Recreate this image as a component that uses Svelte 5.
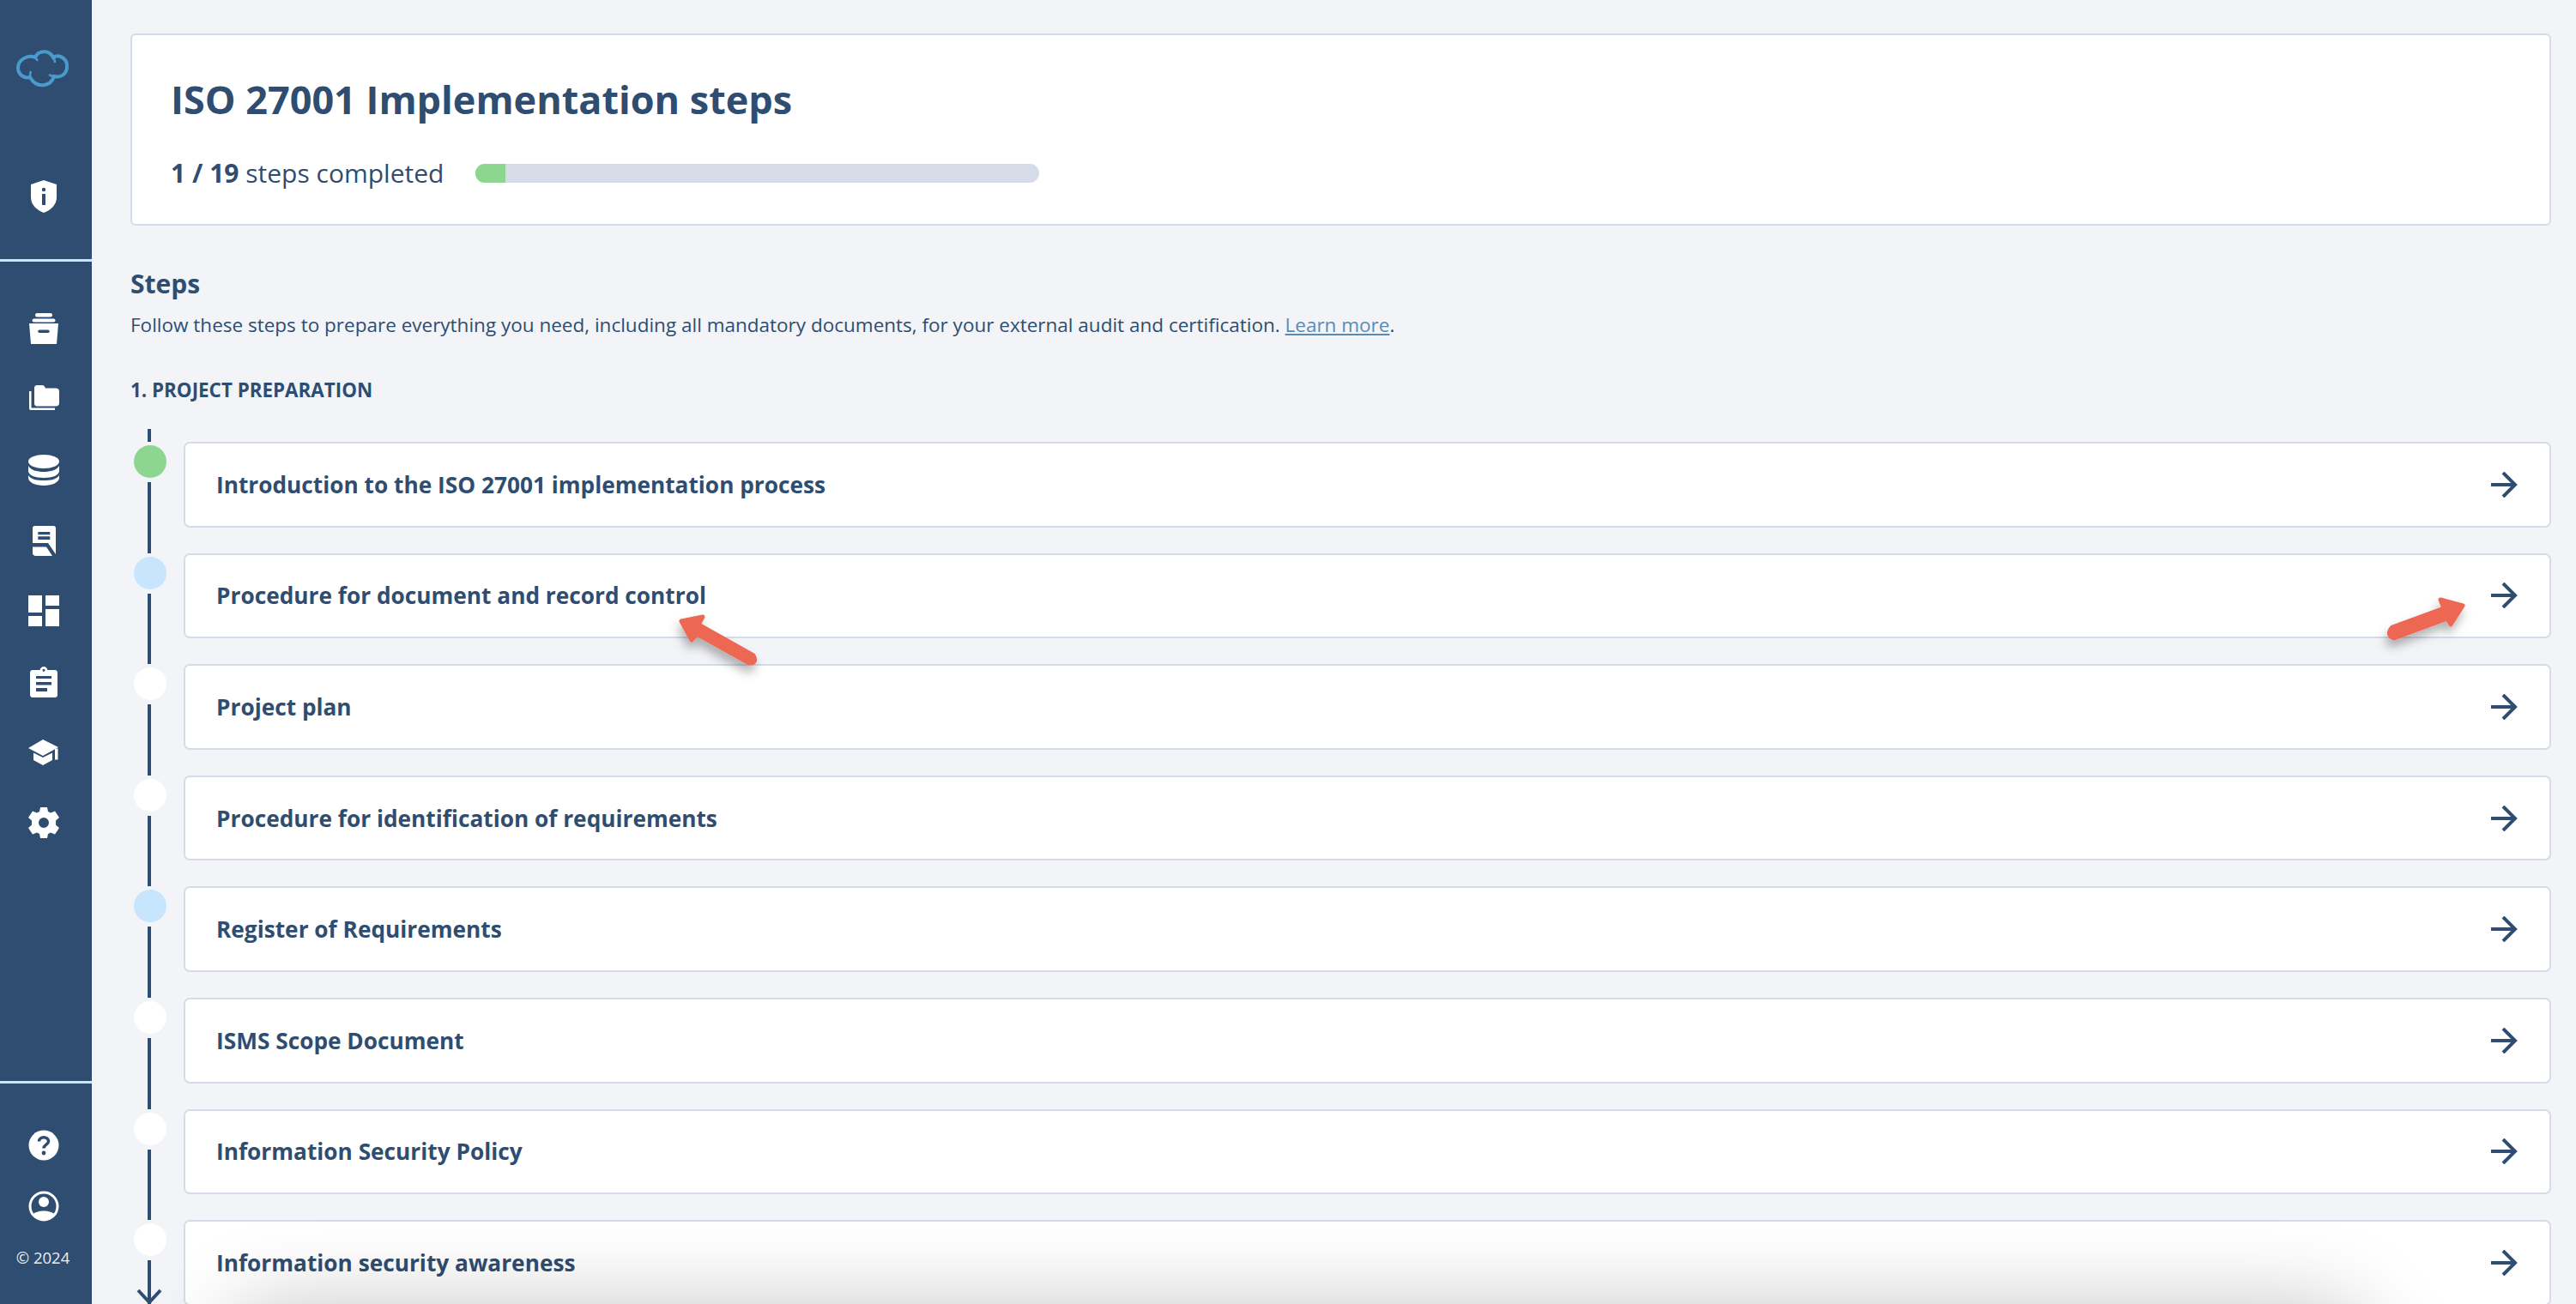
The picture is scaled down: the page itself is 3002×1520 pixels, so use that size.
<script lang="ts">
	const steps = [
		{ title: 'Introduction to the ISO 27001 implementation process', state: 'done' },
		{ title: 'Procedure for document and record control', state: 'active' },
		{ title: 'Project plan', state: 'todo' },
		{ title: 'Procedure for identification of requirements', state: 'todo' },
		{ title: 'Register of Requirements', state: 'active' },
		{ title: 'ISMS Scope Document', state: 'todo' },
		{ title: 'Information Security Policy', state: 'todo' },
		{ title: 'Information security awareness', state: 'todo' }
	];
</script>

<div class="app">
	<aside class="rail">
		<div class="logo">
			<svg width="62" height="50" viewBox="0 0 62 50" fill="none" stroke="#4a9bcb" stroke-width="4">
				<path d="M22 11C25 3 38 1 43 11C50 6 60 13 59 22C59 30 52 35 44 33C40 45 24 48 16 34C8 36 2 30 2 23C2 14 13 7 22 11Z" />
				<path d="M22 11Q24 13 25 15M43 11Q45 13 45 17M16 34Q16 30 17 27M44 33Q41 33 38 31" stroke-width="2.5" />
			</svg>
		</div>
		<div class="rail-top">
			<svg viewBox="0 0 36 38" width="36" height="38" fill="#fff">
				<path d="M18 0L33 5V20C33 29 26 35 18 38C10 35 3 29 3 20V5Z" />
				<circle cx="18" cy="11" r="2.2" fill="#2f4d70" />
				<rect x="16" y="16" width="4" height="13" fill="#2f4d70" />
			</svg>
		</div>

		<nav class="rail-nav">
			<span class="nav-item">
				<svg viewBox="0 0 36 36" width="36" height="36" fill="#fff">
					<rect x="8" y="0" width="20" height="4.5" rx="2.2" />
					<rect x="4.5" y="6.5" width="27" height="4" rx="2" />
					<path fill-rule="evenodd" d="M1 12H35L33 36H3ZM13 19.5a1.8 1.8 0 0 0 0 3.6H23a1.8 1.8 0 0 0 0-3.6Z" />
				</svg>
			</span>
			<span class="nav-item">
				<svg viewBox="0 0 36 32" width="36" height="32" fill="#fff">
					<path d="M7 3C7 1.5 8 0 10 0H16C18 0 19 1 20 3.5H32C34.5 3.5 36 5 36 7V21C36 23 34.5 24.5 32 24.5H10C8 24.5 7 23 7 21Z" />
					<path d="M1 7H3.5V26.5H31V29H3C1.7 29 1 28.3 1 27Z" />
				</svg>
			</span>
			<span class="nav-item">
				<svg viewBox="0 0 36 36" width="36" height="36" fill="#fff">
					<ellipse cx="18" cy="8" rx="18" ry="8" />
					<path d="M0 13C3 18 10 20 18 20S33 18 36 13V19C36 24 28 27 18 27S0 24 0 19Z" />
					<path d="M0 24C3 29 10 30 18 30S33 29 36 24V27C36 32 28 36 18 36S0 32 0 27Z" />
				</svg>
			</span>
			<span class="nav-item">
				<svg viewBox="0 0 27 35" width="27" height="35" fill="#fff">
					<path fill-rule="evenodd" d="M2.5 0H24.5C26 0 27 1 27 2.5V33L18 20H0V2.5C0 1 1 0 2.5 0ZM6.3 7V10.3H20.3V7ZM6.3 12.3V16H20.3V12.3Z" />
					<path d="M0 24.5H16L23 35H3.5C1.5 35 0 33.5 0 31.5Z" />
				</svg>
			</span>
			<span class="nav-item">
				<svg viewBox="0 0 36 36" width="36" height="36" fill="#fff">
					<rect x="0" y="0" width="16" height="20" />
					<rect x="20" y="0" width="16" height="12" />
					<rect x="0" y="24" width="16" height="12" />
					<rect x="20" y="16" width="16" height="20" />
				</svg>
			</span>
			<span class="nav-item">
				<svg viewBox="0 0 32 36" width="32" height="36" fill="#fff">
					<path fill-rule="evenodd" d="M3 4H11.5C12 1.5 14 0 16 0S20 1.5 20.5 4H29C30.7 4 32 5.3 32 7V33C32 34.7 30.7 36 29 36H3C1.3 36 0 34.7 0 33V7C0 5.3 1.3 4 3 4ZM16 2.8a1.5 1.5 0 1 0 0 3a1.5 1.5 0 0 0 0-3ZM7 11V14H25V11ZM7 18V21.5H25V18ZM7 25V29H20V25Z" />
				</svg>
			</span>
			<span class="nav-item">
				<svg viewBox="0 0 36 30" width="36" height="30" fill="#fff">
					<path d="M17 0L35 9L17 19L0 10Z" />
					<path d="M6 15.5L17 21L28 15.5V24L17 30L6 24Z" />
					<rect x="31" y="10.5" width="3.5" height="13" />
				</svg>
			</span>
			<span class="nav-item">
				<svg viewBox="0 0 36 36" width="36" height="36" fill="#fff">
					<path fill-rule="evenodd" d="M14 0H22L23 5L26 6.5L31 4.5L36 12L32 15.5V20.5L36 24L31 31.5L26 29.5L23 31L22 36H14L13 31L10 29.5L5 31.5L0 24L4 20.5V15.5L0 12L5 4.5L10 6.5L13 5ZM18 12a6 6 0 1 0 0 12a6 6 0 0 0 0-12Z" />
				</svg>
			</span>
		</nav>

		<div class="rail-bottom">
			<span class="nav-item">
				<svg viewBox="0 0 36 36" width="36" height="36">
					<circle cx="18" cy="18" r="17.5" fill="#fff" />
					<path d="M12.5 13.5C12.5 7 23.5 7 23.5 13.5C23.5 17 18 17.5 18 21.5" fill="none" stroke="#2f4d70" stroke-width="3.5" />
					<circle cx="18" cy="27" r="2.4" fill="#2f4d70" />
				</svg>
			</span>
			<span class="nav-item">
				<svg viewBox="0 0 36 36" width="36" height="36">
					<circle cx="18" cy="18" r="16" fill="none" stroke="#fff" stroke-width="3" />
					<circle cx="18" cy="13" r="6" fill="#fff" />
					<path d="M5 28C9 22 27 22 31 28C26 35 10 35 5 28Z" fill="#fff" />
				</svg>
			</span>
			<span class="copyright">© 2024</span>
		</div>
	</aside>

	<main class="content">
		<section class="summary">
			<h1>ISO 27001 Implementation steps</h1>
			<div class="progress-row">
				<span class="progress-label"><b>1 / 19</b> steps completed</span>
				<span class="progress"><span class="progress-fill"></span></span>
			</div>
		</section>

		<h2>Steps</h2>
		<p class="lead">
			Follow these steps to prepare everything you need, including all mandatory documents, for your external audit and certification. <a href="#learn">Learn more</a>.
		</p>
		<h3>1. PROJECT PREPARATION</h3>

		<ol class="steps">
			{#each steps as step, i}
				<li class="step">
					<span class="track">
						<span class="dot {step.state}"></span>
						<span class="line"></span>
						{#if i === steps.length - 1}
							<svg class="track-end" width="30" height="20" viewBox="0 0 30 20" fill="none" stroke="#2f4d70" stroke-width="4">
								<path d="M2 2L15 16L28 2" />
							</svg>
						{/if}
					</span>
					<a class="card" href="#step">
						<span>{step.title}</span>
						<svg width="32" height="30" viewBox="0 0 32 30" fill="none" stroke="#2f4d70" stroke-width="4">
							<path d="M1 15H29M15 1L29 15L15 29" />
						</svg>
					</a>
				</li>
			{/each}
		</ol>
	</main>

	<!-- annotations and the fade sit on top of the screenshot -->
	<svg class="marks" width="3002" height="1520" viewBox="0 0 3002 1520">
		<defs>
			<filter id="soft" x="-30%" y="-30%" width="170%" height="170%">
				<feDropShadow dx="-2" dy="8" stdDeviation="6" flood-color="#000" flood-opacity="0.3" />
			</filter>
		</defs>
		<g filter="url(#soft)" fill="#ec6753" stroke="#ec6753" stroke-linejoin="round">
			<path d="M794 724L819 719L814 728L878 764Q883 773 873 773L812 739L806 746Z" stroke-width="5" />
			<path d="M2788 731L2848 709L2844 699L2870 706L2856 728L2852 721L2790 744Q2780 740 2788 731Z" stroke-width="5" />
		</g>
	</svg>
	<div class="fade"></div>
</div>

<style>
	:global(body) {
		margin: 0;
		background: #f2f4f8;
		font-family: 'Open Sans', 'Noto Sans', sans-serif;
		color: #2f4d70;
	}
	.app {
		position: relative;
		display: flex;
		width: 3002px;
		height: 1520px;
		overflow: hidden;
	}
	.rail {
		flex: 0 0 107px;
		display: flex;
		flex-direction: column;
		background: #2f4d70;
	}
	.logo {
		display: flex;
		justify-content: center;
		box-sizing: border-box;
		height: 154px;
		padding: 56px 7px 0 0;
	}
	.rail-top {
		display: flex;
		justify-content: center;
		height: 92px;
		padding: 56px 5px 0 0;
		border-bottom: 3px solid #c7e5fc;
	}
	.rail-nav {
		display: flex;
		flex-direction: column;
		padding-top: 37px;
	}
	.nav-item {
		display: flex;
		align-items: center;
		justify-content: center;
		height: 82.3px;
		padding-right: 5px;
	}
	.rail-bottom {
		display: flex;
		flex-direction: column;
		margin-top: auto;
		box-sizing: border-box;
		height: 260px;
		padding-top: 36px;
		border-top: 3px solid #c7e5fc;
	}
	.rail-bottom .nav-item {
		height: 71px;
	}
	.copyright {
		margin-top: 13px;
		padding-right: 7px;
		text-align: center;
		font-size: 18.5px;
		line-height: 24px;
		color: #e8eef5;
	}
	.content {
		flex: 1;
		min-width: 0;
		padding: 39px 29px 0 45px;
	}
	.summary {
		box-sizing: border-box;
		height: 224px;
		padding: 40px 45px 0;
		background: #fff;
		border: 2px solid #d5dce8;
		border-radius: 6px;
	}
	h1 {
		margin: 0;
		font-size: 45px;
		line-height: 70px;
		font-weight: 700;
	}
	.progress-row {
		display: flex;
		align-items: center;
		gap: 37px;
		margin-top: 29px;
	}
	.progress-label {
		font-size: 30px;
		line-height: 44px;
		white-space: nowrap;
	}
	.progress {
		display: block;
		width: 657px;
		height: 22px;
		border-radius: 11px;
		background: #d5dce8;
		overflow: hidden;
	}
	.progress-fill {
		display: block;
		width: 35px;
		height: 100%;
		background: #8dd690;
	}
	h2 {
		margin: 44px 0 0;
		font-size: 30px;
		line-height: 48px;
		font-weight: 700;
	}
	.lead {
		margin: 6px 0 0;
		font-size: 22.5px;
		line-height: 36px;
	}
	.lead a {
		color: #5b8ab8;
	}
	h3 {
		margin: 41px 0 0;
		font-size: 22.4px;
		line-height: 34px;
		font-weight: 700;
	}
	.steps {
		list-style: none;
		margin: 28px 0 0;
		padding: 0;
	}
	.step {
		position: relative;
		display: flex;
		height: 129.6px;
		box-sizing: border-box;
		padding-top: 15px;
	}
	.track {
		position: relative;
		flex: 0 0 62px;
	}
	.dot {
		position: absolute;
		left: 4px;
		top: 4px;
		width: 38px;
		height: 38px;
		border-radius: 50%;
		background: #fff;
	}
	.dot.done {
		background: #8dd690;
	}
	.dot.active {
		background: #c7e5fc;
	}
	.line {
		position: absolute;
		left: 20px;
		top: 47px;
		bottom: -15px;
		width: 4px;
		background: #2f4d70;
	}
	.step:first-child::before {
		content: '';
		position: absolute;
		left: 20px;
		top: 0;
		height: 15px;
		width: 4px;
		background: #2f4d70;
	}
	.track-end {
		position: absolute;
		left: 7px;
		top: 80px;
	}
	.card {
		flex: 1;
		display: flex;
		align-items: center;
		justify-content: space-between;
		box-sizing: border-box;
		height: 99.6px;
		padding: 0 37px 0 36px;
		background: #fff;
		border: 2px solid #d5dce8;
		border-radius: 7px;
		font-size: 26.25px;
		font-weight: 700;
		color: #2f4d70;
		text-decoration: none;
	}
	.marks {
		position: absolute;
		left: 0;
		top: 0;
		pointer-events: none;
	}
	.fade {
		position: absolute;
		left: 305px;
		right: 285px;
		top: 1570px;
		height: 60px;
		border-radius: 60px;
		box-shadow: 0 0 100px 50px rgba(0, 0, 0, 0.22);
		pointer-events: none;
	}
</style>
